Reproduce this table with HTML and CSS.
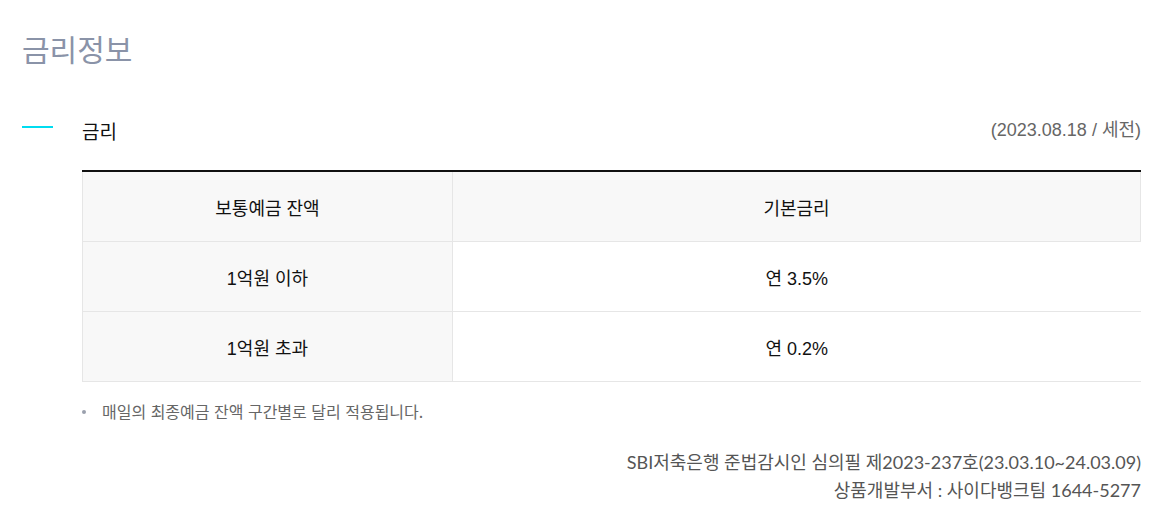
FILE: index.html
```html
<!DOCTYPE html>
<html lang="ko">
<head>
    <meta charset="UTF-8">
    <meta name="viewport" content="width=device-width, initial-scale=1.0">
    <title>금리정보</title>
    <link rel="stylesheet" href="styles.css">
</head>
<body>
    <h1 class="page-title">금리정보</h1>

    <div class="section">
        <span class="section-mark"></span>
        <div class="section-body">
            <div class="section-head">
                <h2>금리</h2>
                <span class="date">(2023.08.18 / 세전)</span>
            </div>

            <table class="rate-table">
                <thead>
                    <tr>
                        <th>보통예금 잔액</th>
                        <th>기본금리</th>
                    </tr>
                </thead>
                <tbody>
                    <tr>
                        <th>1억원 이하</th>
                        <td>연 3.5%</td>
                    </tr>
                    <tr>
                        <th>1억원 초과</th>
                        <td>연 0.2%</td>
                    </tr>
                </tbody>
            </table>

            <ul class="notes">
                <li>매일의 최종예금 잔액 구간별로 달리 적용됩니다.</li>
            </ul>

            <div class="footer-info">
                <p>SBI저축은행 준법감시인 심의필 제2023-237호(23.03.10~24.03.09)</p>
                <p>상품개발부서 : 사이다뱅크팀 1644-5277</p>
            </div>
        </div>
    </div>
</body>
</html>
```

FILE: styles.css
```css
body {
    margin: 0;
    padding: 0 21px 0 22px;
    font-family: "Noto Sans CJK KR", "Liberation Sans", sans-serif;
    color: #222;
    background: #fff;
}
.page-title {
    margin: 0;
    padding-top: 27px;
    font-size: 30px;
    font-weight: 400;
    line-height: 42px;
    color: #8a93a8;
}
.section {
    display: flex;
    margin-top: 50px;
}
.section-mark {
    flex: 0 0 31px;
    height: 2px;
    margin-top: 7px;
    margin-right: 29px;
    background: #00dcf0;
}
.section-body {
    flex: 1;
}
.section-head {
    display: flex;
    justify-content: space-between;
    align-items: flex-start;
    height: 51px;
}
.section-head h2 {
    margin: 0;
    font-size: 19px;
    font-weight: 400;
    line-height: 24px;
    color: #111;
}
.date {
    font-family: "Liberation Sans", "Noto Sans CJK KR", sans-serif;
    font-size: 18px;
    line-height: 22px;
    color: #666;
}
.rate-table {
    width: 100%;
    border-collapse: collapse;
    border-top: 2px solid #111;
    font-size: 18px;
    font-family: "Liberation Sans", "Noto Sans CJK KR", sans-serif;
}
.rate-table th,
.rate-table td {
    height: 69px;
    padding: 0;
    text-align: center;
    font-weight: 400;
    border-bottom: 1px solid #e6e6e6;
    color: #111;
}
.rate-table th {
    width: 369px;
    background: #f8f8f8;
    border-left: 1px solid #e6e6e6;
    border-right: 1px solid #e6e6e6;
}
.rate-table thead th + th {
    width: auto;
    border-left: 0;
}
.rate-table td {
    background: #fff;
}
.notes {
    list-style: none;
    margin: 18px 0 0;
    padding: 0;
    font-size: 16px;
    color: #666;
}
.notes li {
    position: relative;
    padding-left: 20px;
    line-height: 22px;
}
.notes li::before {
    content: "";
    position: absolute;
    left: 0;
    top: 10px;
    width: 4px;
    height: 4px;
    border-radius: 50%;
    background: #9aa0ad;
}
.footer-info {
    margin-top: 26px;
    text-align: right;
    font-family: "Lato", "Noto Sans CJK KR", sans-serif;
    font-size: 18px;
    color: #555;
}
.footer-info p {
    margin: 0;
    line-height: 28px;
}
```
